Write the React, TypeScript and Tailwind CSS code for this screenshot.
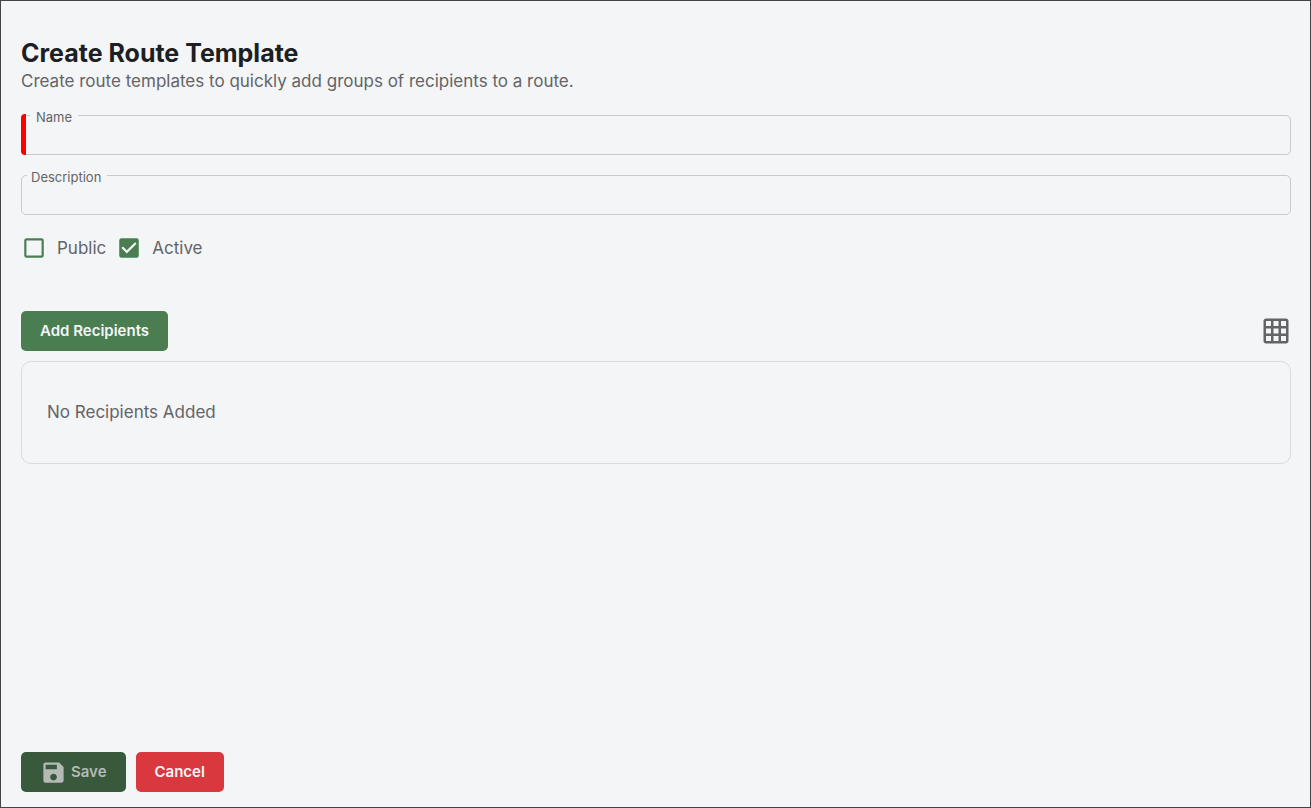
import { useState } from "react";
import { MdCheckBox, MdCheckBoxOutlineBlank, MdGridOn, MdSave } from "react-icons/md";

type FieldProps = { id: string; label: string; required?: boolean };

function TextField({ id, label, required = false }: FieldProps) {
  return (
    <div className="relative">
      <input
        id={id}
        type="text"
        required={required}
        className={
          required
            ? "block h-10 w-full rounded-[5px] border border-[#c8cacc] bg-transparent pr-3 pl-4 text-base outline-none"
            : "block h-10 w-full rounded-[5px] border border-[#c8cacc] bg-transparent px-3 text-base outline-none"
        }
      />
      {required && <span className="absolute -top-px bottom-0 left-0 w-[5px] rounded-l-[4px] bg-[#ff0000]" />}
      <label
        htmlFor={id}
        className={
          required
            ? "absolute -top-[7px] left-[9px] bg-[#f4f5f7] px-1.5 text-[13px] leading-[18px]"
            : "absolute -top-[7px] left-1.5 bg-[#f4f5f7] pr-1.5 pl-1 text-[13px] leading-[18px]"
        }
      >
        {label}
      </label>
    </div>
  );
}

type CheckProps = { label: string; checked: boolean; onChange: (value: boolean) => void };

function Check({ label, checked, onChange }: CheckProps) {
  const Icon = checked ? MdCheckBox : MdCheckBoxOutlineBlank;
  return (
    <label className="flex items-center gap-2.5 text-[17px] leading-6">
      <span className="grid size-[26px] place-items-center">
        <input
          type="checkbox"
          checked={checked}
          onChange={(e) => onChange(e.target.checked)}
          className="col-start-1 row-start-1 size-5 appearance-none"
        />
        <Icon size={26} className="pointer-events-none col-start-1 row-start-1 text-[#4a7d50]" />
      </span>
      {label}
    </label>
  );
}

export default function App() {
  const [isPublic, setIsPublic] = useState(false);
  const [isActive, setIsActive] = useState(true);

  return (
    <main className="flex min-h-screen flex-col border border-[#444446] bg-[#f4f5f7] pt-9 pr-[19px] pb-[15px] pl-5 font-['Inter','Liberation_Sans',sans-serif] text-[#636466]">
      <header>
        <h1 className="text-[25px] leading-8 font-bold text-[#1c2022]">Create Route Template</h1>
        <p className="text-[17px] leading-6">Create route templates to quickly add groups of recipients to a route.</p>
      </header>

      <form className="flex grow flex-col pt-[22px]" onSubmit={(e) => e.preventDefault()}>
        <div className="flex flex-col gap-5">
          <TextField id="name" label="Name" required />
          <TextField id="description" label="Description" />
          <div className="flex gap-2.5">
            <Check label="Public" checked={isPublic} onChange={setIsPublic} />
            <Check label="Active" checked={isActive} onChange={setIsActive} />
          </div>
        </div>

        <section className="flex flex-col gap-2.5 pt-[50px]">
          <div className="flex items-center justify-between">
            <button type="button" className="h-10 rounded-[5px] bg-[#4a7d50] px-[19px] text-[15px] font-semibold text-[#f4f5f7]">
              Add Recipients
            </button>
            <button type="button" aria-label="Show grid">
              <MdGridOn size={30} />
            </button>
          </div>
          <div className="rounded-[10px] border border-[#d9dbdd] px-[25px] py-[38px] text-[17px] leading-[25px]">
            No Recipients Added
          </div>
        </section>

        <footer className="mt-auto flex gap-2.5">
          <button
            type="submit"
            disabled
            className="flex h-10 items-center gap-1 rounded-[5px] bg-[#39593c] px-[19px] text-[15px] font-semibold text-[#b5bab6]"
          >
            <MdSave size={27} />
            Save
          </button>
          <button type="button" className="h-10 rounded-[5px] bg-[#d9383f] px-[19px] text-[15px] font-semibold text-[#f4f5f7]">
            Cancel
          </button>
        </footer>
      </form>
    </main>
  );
}
